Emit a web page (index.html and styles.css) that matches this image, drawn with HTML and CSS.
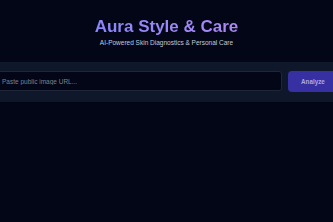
FILE: index.html
```html
<!DOCTYPE html>
<html lang="en">
<head>
    <meta charset="UTF-8">
    <meta name="viewport" content="width=device-width, initial-scale=1.0">
    <title>Aura Style &amp; Care</title>
    <link rel="stylesheet" href="styles.css">
</head>
<body>
    <header class="header">
        <h1 class="title">Aura Style &amp; Care</h1>
        <p class="subtitle">AI-Powered Skin Diagnostics &amp; Personal Care</p>
    </header>

    <div class="search-band">
        <div class="search-row">
            <input type="text" class="url-input" placeholder="Paste public image URL...">
            <button class="analyze-btn">Analyze</button>
        </div>
    </div>
</body>
</html>
```

FILE: styles.css
```css
body {
    margin: 0;
    background-color: #020617;
    font-family: "Liberation Sans", Arial, sans-serif;
    overflow: hidden;
}
.header {
    text-align: center;
    padding-top: 17px;
    height: 45px;
}
.title {
    margin: 0;
    font-size: 17px;
    line-height: 20px;
    font-weight: bold;
    background: linear-gradient(to right, #8a86fa, #ad88f6);
    -webkit-background-clip: text;
    background-clip: text;
    color: transparent;
    display: inline-block;
}
.subtitle {
    margin: 2px 0 0;
    font-size: 6.5px;
    line-height: 8px;
    color: #c3cad8;
}
.search-band {
    background-color: #0f172a;
    padding: 9px 0 10px;
}
.search-row {
    display: flex;
    gap: 6px;
    margin: 0 -10px 0 -10px;
}
.url-input {
    flex: 1;
    height: 20px;
    box-sizing: border-box;
    padding: 0 0 0 11px;
    background-color: #020617;
    border: 1px solid #1e2638;
    border-radius: 3px;
    font-family: "Liberation Sans", Arial, sans-serif;
    font-size: 6.5px;
    color: #cbd5e1;
    outline: none;
}
.url-input::placeholder {
    color: #7a8190;
}
.analyze-btn {
    width: 55px;
    height: 21px;
    padding: 0 0 0 13px;
    text-align: left;
    background-color: #3730a3;
    color: #a9aae0;
    border: none;
    border-radius: 4px;
    font-family: "Liberation Sans", Arial, sans-serif;
    font-size: 6.3px;
    font-weight: bold;
    cursor: pointer;
}
```
